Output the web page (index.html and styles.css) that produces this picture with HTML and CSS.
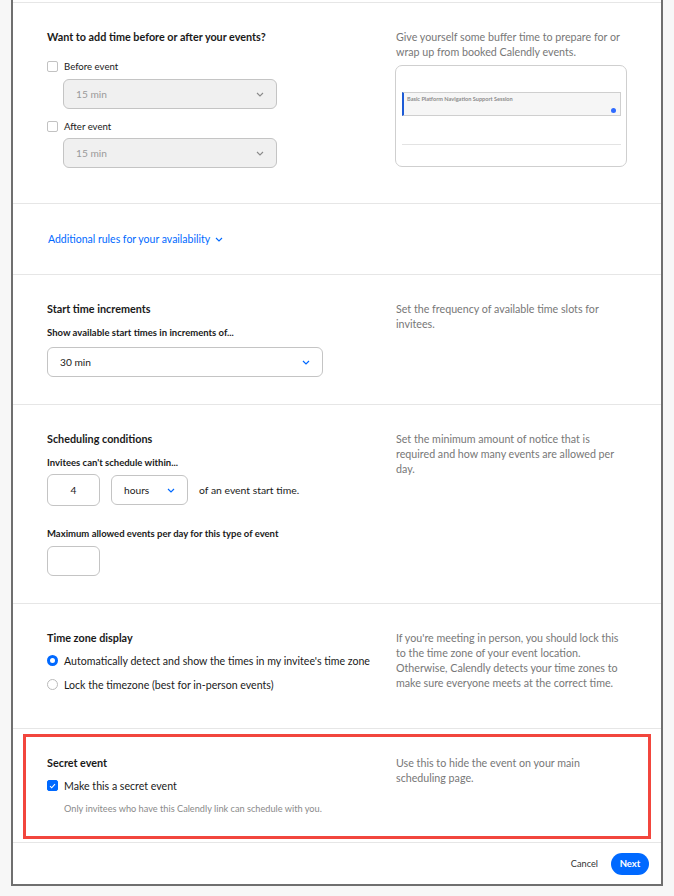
FILE: index.html
```html
<!DOCTYPE html>
<html lang="en">
<head>
  <meta charset="UTF-8">
  <meta name="viewport" content="width=device-width, initial-scale=1.0">
  <title>Event type - Limits and buffers</title>
  <link rel="stylesheet" href="styles.css">
</head>
<body>
    <div class="frame">

        <!-- Buffer times -->
        <div class="section section-buffer">
            <div class="col-main">
                <p class="section-title">Want to add time before or after your events?</p>
                <label class="check-row first">
                    <span class="checkbox"></span>
                    Before event
                </label>
                <div class="select select-disabled select-indent">
                    <span>15 min</span>
                    <svg class="chevron" width="8" height="5" viewBox="0 0 8 5"><path d="M1 1l3 3 3-3" fill="none" stroke="currentColor" stroke-width="1.1"/></svg>
                </div>
                <label class="check-row">
                    <span class="checkbox"></span>
                    After event
                </label>
                <div class="select select-disabled select-indent tight">
                    <span>15 min</span>
                    <svg class="chevron" width="8" height="5" viewBox="0 0 8 5"><path d="M1 1l3 3 3-3" fill="none" stroke="currentColor" stroke-width="1.1"/></svg>
                </div>
            </div>
            <div class="col-side">
                <p class="hint">Give yourself some buffer time to prepare for or wrap up from booked Calendly events.</p>
                <div class="preview">
                    <div class="preview-event">
                        <span>Basic Platform Navigation Support Session</span>
                        <span class="preview-dot"></span>
                    </div>
                    <div class="preview-line"></div>
                </div>
            </div>
        </div>

        <!-- Additional rules toggle -->
        <div class="section section-rules">
            <a class="rules-link" href="#">
                Additional rules for your availability
                <svg width="8" height="5" viewBox="0 0 8 5"><path d="M1 1l3 3 3-3" fill="none" stroke="currentColor" stroke-width="1.1"/></svg>
            </a>
        </div>

        <!-- Start time increments -->
        <div class="section section-increments">
            <div class="col-main">
                <p class="section-title">Start time increments</p>
                <p class="field-label">Show available start times in increments of...</p>
                <div class="select select-wide">
                    <span>30 min</span>
                    <svg class="chevron blue" width="8" height="5" viewBox="0 0 8 5"><path d="M1 1l3 3 3-3" fill="none" stroke="currentColor" stroke-width="1.2"/></svg>
                </div>
            </div>
            <div class="col-side">
                <p class="hint">Set the frequency of available time slots for invitees.</p>
            </div>
        </div>

        <!-- Scheduling conditions -->
        <div class="section section-conditions">
            <div class="col-main">
                <p class="section-title">Scheduling conditions</p>
                <p class="field-label">Invitees can't schedule within...</p>
                <div class="notice-row">
                    <div class="num-box">4</div>
                    <div class="select select-unit">
                        <span>hours</span>
                        <svg class="chevron blue" width="8" height="5" viewBox="0 0 8 5"><path d="M1 1l3 3 3-3" fill="none" stroke="currentColor" stroke-width="1.2"/></svg>
                    </div>
                    <span class="notice-text">of an event start time.</span>
                </div>
                <p class="field-label spaced">Maximum allowed events per day for this type of event</p>
                <div class="num-box empty"></div>
            </div>
            <div class="col-side">
                <p class="hint">Set the minimum amount of notice that is required and how many events are allowed per day.</p>
            </div>
        </div>

        <!-- Time zone -->
        <div class="section section-timezone">
            <div class="col-main">
                <p class="section-title">Time zone display</p>
                <label class="radio-row first">
                    <span class="radio checked"></span>
                    Automatically detect and show the times in my invitee's time zone
                </label>
                <label class="radio-row">
                    <span class="radio"></span>
                    Lock the timezone (best for in-person events)
                </label>
            </div>
            <div class="col-side">
                <p class="hint">If you're meeting in person, you should lock this to the time zone of your event location. Otherwise, Calendly detects your time zones to make sure everyone meets at the correct time.</p>
            </div>
        </div>

        <!-- Secret event -->
        <div class="section-secret">
            <div class="highlight">
                <div class="col-main">
                    <p class="section-title">Secret event</p>
                    <label class="check-row secret">
                        <span class="checkbox checked">
                            <svg width="7" height="6" viewBox="0 0 7 6"><path d="M1 3.2l1.7 1.6L6 1.2" fill="none" stroke="#fff" stroke-width="1.1"/></svg>
                        </span>
                        Make this a secret event
                    </label>
                    <p class="secret-note">Only invitees who have this Calendly link can schedule with you.</p>
                </div>
                <div class="col-side">
                    <p class="hint">Use this to hide the event on your main scheduling page.</p>
                </div>
            </div>
        </div>

        <!-- Footer -->
        <div class="footer">
            <a class="cancel" href="#">Cancel</a>
            <button type="button" class="next-button">Next</button>
        </div>
    </div>
</body>
</html>
```

FILE: styles.css
```css
/* General */
body {
    margin: 0;
    background-color: #f7f7f7;
    font-family: 'Lato', 'Liberation Sans', sans-serif;
    color: #1a1a1a;
}

p {
    margin: 0;
}

a {
    text-decoration: none;
}

.frame {
    margin-left: 11px;
    width: 648px;
    background: #ffffff;
    border: 2px solid #6f6f6f;
    border-top: none;
    padding-top: 2px;
}

/* Sections */
.section {
    display: grid;
    grid-template-columns: 349px 1fr;
    box-sizing: border-box;
    padding: 26px 30px 0 34px;
    border-top: 1px solid #e6e6e6;
}

.section-buffer { height: 201px; }
.section-rules { height: 71px; display: block; padding-top: 28px; }
.section-increments { height: 130px; }
.section-conditions { height: 199px; }
.section-timezone { height: 125px; }

.section-title {
    font-size: 10.8px;
    font-weight: 700;
    line-height: 15px;
    color: #1a1a1a;
}

.field-label {
    margin-top: 9px;
    font-size: 9.5px;
    font-weight: 700;
    line-height: 15px;
    color: #1a1a1a;
}

.field-label.spaced {
    margin-top: 20px;
}

.hint {
    font-size: 10.7px;
    line-height: 15px;
    color: #777;
}

/* Checkbox & radio */
.check-row,
.radio-row {
    display: flex;
    align-items: center;
    gap: 6px;
    height: 15px;
    font-size: 10.6px;
    color: #1a1a1a;
}

.check-row { margin-top: 10px; font-size: 9.6px; }
.check-row.first { margin-top: 15px; }

.checkbox {
    width: 11px;
    height: 11px;
    box-sizing: border-box;
    border: 1px solid #c2c2c2;
    border-radius: 2px;
    background: #fff;
    display: flex;
    align-items: center;
    justify-content: center;
}

.checkbox.checked {
    background: #0069ff;
    border-color: #0069ff;
}

.radio-row { margin-top: 9px; }
.radio-row.first { margin-top: 8px; }

.radio {
    width: 11px;
    height: 11px;
    box-sizing: border-box;
    border: 1px solid #bababa;
    border-radius: 50%;
    background: #fff;
}

.radio.checked {
    border: 3px solid #0069ff;
}

/* Selects */
.select {
    display: flex;
    align-items: center;
    justify-content: space-between;
    box-sizing: border-box;
    height: 30px;
    padding: 0 12px;
    border: 1px solid #c4c4c4;
    border-radius: 6px;
    background: #fff;
    font-size: 10.2px;
    color: #1a1a1a;
}

.select-disabled {
    background: #f0f0f0;
    color: #9a9a9a;
}

.select-indent {
    width: 214px;
    margin: 5px 0 0 16px;
}

.select-indent.tight {
    margin-top: 4px;
}

.select-wide {
    width: 276px;
    margin-top: 7px;
}

.chevron {
    color: #8a8a8a;
}

.chevron.blue {
    color: #0069ff;
}

/* Preview card */
.preview {
    margin: 6px 0 0 -1px;
    width: 232px;
    height: 102px;
    box-sizing: border-box;
    border: 1px solid #cfcfcf;
    border-radius: 7px;
    padding: 26px 5px 0 6px;
}

.preview-event {
    height: 24px;
    box-sizing: border-box;
    display: flex;
    flex-direction: column;
    justify-content: space-between;
    padding: 2px 4px 2px 3px;
    background: #f6f6f6;
    border: 1px solid #cfcfcf;
    border-left: 2px solid #1d5bd6;
    font-size: 5.6px;
    font-weight: 700;
    color: #8c8c8c;
}

.preview-dot {
    align-self: flex-end;
    width: 5px;
    height: 5px;
    border-radius: 50%;
    background: #2f6bff;
}

.preview-line {
    margin-top: 28px;
    border-top: 1px solid #e3e3e3;
}

/* Additional rules */
.rules-link {
    display: flex;
    width: fit-content;
    align-items: center;
    gap: 5px;
    margin-left: 1px;
    font-size: 10.5px;
    line-height: 15px;
    color: #0069ff;
}

/* Scheduling conditions */
.notice-row {
    display: flex;
    align-items: center;
    margin-top: 4px;
}

.num-box {
    width: 53px;
    height: 32px;
    box-sizing: border-box;
    border: 1px solid #c4c4c4;
    border-radius: 6px;
    display: flex;
    align-items: center;
    justify-content: center;
    font-size: 10.2px;
}

.num-box.empty {
    height: 30px;
    margin-top: 5px;
}

.select-unit {
    width: 77px;
    margin-left: 11px;
}

.notice-text {
    margin-left: 11px;
    font-size: 10.4px;
}

/* Secret event */
.section-secret {
    height: 114px;
    box-sizing: border-box;
    padding: 5px 10px 0;
    border-top: 1px solid #e6e6e6;
}

.highlight {
    display: grid;
    grid-template-columns: 349px 1fr;
    height: 105px;
    box-sizing: border-box;
    border: 3px solid #f2463d;
    padding: 18px 24px 0 21px;
}

.check-row.secret {
    margin-top: 8px;
    font-size: 10.6px;
}

.secret-note {
    margin-top: 8px;
    padding-left: 17px;
    font-size: 9.2px;
    line-height: 15px;
    color: #8a8a8a;
}

/* Footer */
.footer {
    display: flex;
    align-items: center;
    justify-content: flex-end;
    gap: 13px;
    height: 42px;
    padding-right: 12px;
    border-top: 1px solid #e6e6e6;
    box-sizing: border-box;
}

.cancel {
    font-size: 9.2px;
    color: #333;
}

.next-button {
    width: 38px;
    height: 22px;
    padding: 0;
    border: none;
    border-radius: 11px;
    background: #0069ff;
    color: #fff;
    font-family: inherit;
    font-size: 9.5px;
    font-weight: 700;
    cursor: pointer;
}
```
